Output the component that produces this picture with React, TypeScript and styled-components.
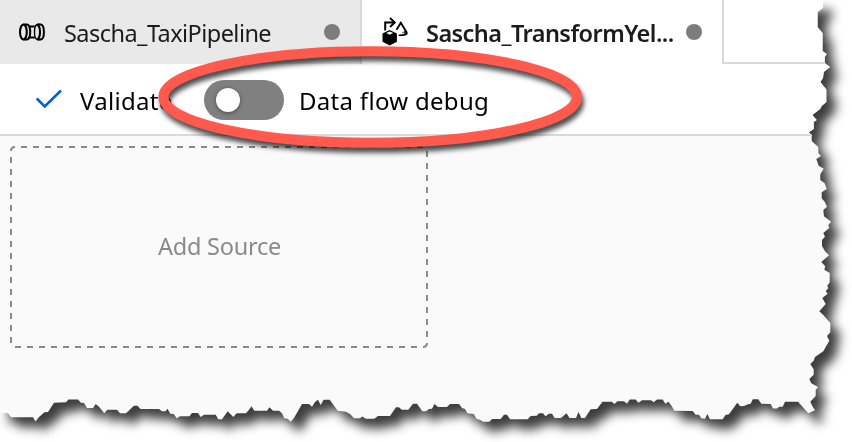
import React from "react";
import styled, { createGlobalStyle } from "styled-components";

const GlobalStyle = createGlobalStyle`
  body { margin: 0; background: #fff; overflow: hidden; }
  * { box-sizing: border-box; }
`;

// Torn right edge, top to bottom.
const rightEdge: number[][] = [
  [822.7, 0], [822.7, 8], [817.5, 12], [817.5, 27], [822.5, 33], [822.5, 51], [826.7, 54], [824.7, 57],
  [824.7, 63], [830, 67], [823.7, 72], [823, 78], [820.3, 82], [826.3, 89.5], [826.3, 102], [821.7, 106],
  [820, 109], [812.3, 115], [816.7, 120], [813.7, 122], [813.7, 129], [808.7, 132.3], [811.7, 135],
  [811.7, 141], [818.3, 147], [818.3, 153], [821, 156], [816.3, 159], [818.7, 165.7], [823.7, 168.7],
  [820.3, 174.3], [820.3, 180], [824.7, 183.3], [826.7, 189], [821.7, 192.3], [821.7, 198.3],
  [824.7, 201.7], [827, 206.7], [823.3, 210], [824, 216.3], [831, 221.7], [828.3, 225], [829.3, 228],
  [823.3, 233], [825, 236.7], [822, 240], [822, 246], [825, 251.3], [829, 255.3], [821.3, 262],
  [825.3, 266.3], [824.3, 269.7], [829.7, 273], [829.7, 282.3], [827.3, 285.7], [828.3, 288.3],
  [825.7, 291], [827.7, 293.7], [822.3, 298], [825.7, 304], [819.3, 311.3], [823.3, 315], [830.3, 323],
  [830.3, 332.3], [827, 336], [829.3, 340.7], [823.3, 351.3], [815, 357], [813.7, 360.7], [810.3, 364],
  [813.7, 369.3], [813.7, 374.7], [809.3, 379], [811.3, 383.3], [818, 387], [815.7, 390], [815.7, 396],
  [810.3, 401.7], [812.7, 406.7], [815, 410.3], [808.3, 413.3],
];

// Torn bottom edge, left to right.
const bottomEdge: number[][] = [
  [0, 413], [8, 413], [11, 417.3], [33, 417.3], [35.5, 421.5], [39, 417], [44.5, 412.3], [48, 412],
  [54, 402.7], [66, 402.3], [68.5, 399.5], [78, 399.5], [81, 402.7], [84, 403], [87, 408], [93, 408],
  [95.7, 404], [99, 406.7], [104.3, 413.3], [107.3, 409.7], [117, 409.7], [120, 413.3], [126, 413.3],
  [134, 405.7], [137.5, 405.7], [140.5, 409], [159, 409], [162, 411.3], [165.5, 411.3], [167.5, 408.7],
  [170.3, 413.7], [173.7, 414], [176.7, 418.3], [180, 416.3], [189.5, 416.3], [192, 413], [198, 413],
  [200.7, 417], [204, 414.7], [215.7, 414.7], [218.3, 419.3], [222, 419.3], [227.7, 411.3], [233.3, 417],
  [236.7, 413.3], [246, 413.3], [249, 409.7], [251.5, 406.3], [254.3, 410.7], [267, 410.7], [269.5, 407.3],
  [273, 410.7], [279, 410.7], [282, 413.3], [284.3, 418.3], [287.7, 418.7], [290.7, 421.7], [294, 418],
  [302, 404], [309, 404], [312, 406.7], [315, 402], [318, 399.7], [320.7, 405], [323.7, 399.7],
  [329.7, 399.7], [337.7, 410.7], [346, 411.7], [350, 414], [354, 418.3], [360, 418.3], [362.5, 416.5],
  [365.5, 418.7], [374.3, 418.7], [378, 416], [390, 416], [396, 407.3], [399, 407.3], [401.7, 409.7],
  [408.3, 409.7], [413, 403.7], [417, 403.7], [422.3, 411.3], [426, 411.3], [429, 409], [432, 408.7],
  [434.5, 404], [438, 407], [447, 407], [450, 404], [459, 404], [462, 408], [465, 409], [467.5, 413.3],
  [473.7, 414], [476.7, 419], [480, 419.7], [483, 421.7], [489.3, 421.7], [492, 419], [500.7, 419],
  [504, 414.7], [507, 414.7], [510, 419.3], [527.7, 419.3], [530.7, 416], [536.7, 415.7], [539, 413.3],
  [543, 413.3], [545.5, 416.3], [549, 413.7], [552, 413.7], [554.5, 418], [561, 418], [566.5, 413.3],
  [569.5, 418], [576, 418], [578.5, 412], [581.3, 418], [585, 418], [590.7, 409.3], [597, 409],
  [602.5, 401.7], [611.7, 401.7], [614.5, 404], [617.3, 401.3], [624, 401.3], [627, 403.7],
  [629.7, 399.5], [635.5, 399.5], [638.5, 402.7], [642, 400.3], [651, 400.3], [653.7, 402.3],
  [657, 399.5], [662.7, 399.5], [665.3, 403.7], [668.5, 401.7], [671.7, 406], [674.3, 410.7],
  [692.7, 411], [695.7, 414.7], [699, 414.7], [701.3, 418.3], [705, 418.7], [707.3, 414], [710, 419.3],
  [722.7, 419.3], [725.5, 415], [729, 414.3], [737.3, 402.7], [740.3, 406.3], [744, 406], [748, 404.3],
  [750.7, 403.7], [752.7, 399.3], [758.3, 399.3], [761.3, 403.7], [770.7, 404], [773, 408.5],
  [777, 408.5], [779.3, 406.7], [782.7, 406.7], [785, 401.7], [798, 401.7],
];

const outline = [[0, 0], ...rightEdge, ...[...bottomEdge].reverse()]
  .map(([x, y]) => `${x}px ${y}px`)
  .join(", ");

const Stage = styled.main`
  position: relative;
  width: 852px;
  height: 442px;
  overflow: hidden;
  background: #fff;
  font-family: "Noto Sans", "Open Sans", sans-serif;
  color: #000;
`;

const PaperShadow = styled.div`
  filter: drop-shadow(9px 10px 5.5px rgba(0, 0, 0, 0.76));
`;

const Paper = styled.div`
  display: flex;
  flex-direction: column;
  width: 852px;
  height: 442px;
  background: #fafafa;
  clip-path: polygon(${outline});
`;

const TabBar = styled.div`
  display: flex;
  flex: none;
  height: 64px;
  background: #fff;
`;

const Tab = styled.div<{ $active?: boolean }>`
  display: flex;
  align-items: center;
  width: 362px;
  height: 64px;
  padding: 0 20px 0 18px;
  border-right: 2px solid #dadada;
  background: ${(p) => (p.$active ? "#fff" : "#e9e9e9")};
  color: #1b1b1b;
  font-weight: ${(p) => (p.$active ? 600 : 400)};
`;

const TabFill = styled.div`
  flex: 1;
  border-bottom: 2px solid #dadada;
`;

const Label = styled.span<{ $width: number; $spacing: number; $size?: number; $drop?: number }>`
  flex: none;
  width: ${(p) => p.$width}px;
  padding-top: ${(p) => p.$drop ?? 2}px;
  font-size: ${(p) => p.$size ?? 23.5}px;
  letter-spacing: ${(p) => p.$spacing}px;
  line-height: 32px;
  white-space: nowrap;
`;

const TabIcon = styled.svg`
  flex: none;
  width: 28px;
  height: 36px;
  margin-right: 18px;
`;

const Dot = styled.span`
  width: 16px;
  height: 16px;
  margin-left: auto;
  border-radius: 50%;
  background: #7c7c7c;
`;

const Toolbar = styled.div`
  display: flex;
  flex: none;
  align-items: center;
  height: 72px;
  padding-left: 34px;
  border-bottom: 2px solid #dadada;
  background: #fff;
`;

const Check = styled.svg`
  flex: none;
  width: 30px;
  height: 24px;
  margin: 2px 16px 0 0;
`;

const Toggle = styled.div`
  flex: none;
  display: flex;
  align-items: center;
  width: 80px;
  height: 40px;
  margin: 2px 15px 0 28px;
  padding-left: 12px;
  border-radius: 20px;
  background: #808080;
`;

const Knob = styled.span`
  width: 24px;
  height: 24px;
  border-radius: 50%;
  background: #fff;
  box-shadow: 0 1px 4px rgba(0, 0, 0, 0.45);
`;

const Canvas = styled.div`
  flex: 1;
  padding: 10px;
`;

const SourceBox = styled.div`
  position: relative;
  display: flex;
  align-items: center;
  justify-content: center;
  width: 418px;
  height: 202px;
  padding-bottom: 4px;
  color: #8a8a8a;
`;

const DashedFrame = styled.svg`
  position: absolute;
  inset: 0;
  width: 418px;
  height: 202px;
`;

const Highlight = styled.svg`
  position: absolute;
  left: 150px;
  top: 38px;
  width: 445px;
  height: 125px;
  overflow: visible;
  filter: drop-shadow(2px 5px 2.5px rgba(0, 0, 0, 0.7));
`;

const PipelineIcon = () => (
  <TabIcon viewBox="18 14 28 36" fill="none" stroke="#000" strokeWidth="2.1">
    <ellipse cx="23.4" cy="32" rx="3.4" ry="7.5" />
    <path d="M23.4 24.500H27C29.300 25 30.200 28 30.200 32S29.300 39 27 39.500H23.400" />
    <path d="M30 26.500H34.800M30 37.500H34.800" />
    <path d="M40.500 24.500H37.200C35.300 25 34.500 28 34.500 32S35.300 39 37.200 39.500H40.500" strokeWidth="1.400" />
    <path d="M37.600 24.800c1.700 1.300 2.400 4 2.400 7.200s-.7 5.900-2.400 7.200" />
    <path d="M37.200 24.500H40.500c2.200 0 3.400 3.500 3.400 7.500s-1.200 7.500-3.400 7.500H37.200" />
  </TabIcon>
);

const DataFlowIcon = () => (
  <TabIcon viewBox="380 14 28 36" fill="none" stroke="#000">
    <path d="M385.200 30.500v-8h9.300" strokeWidth="2" />
    <path d="M390 18l4.700 4.500-4.700 4.400" strokeWidth="2" />
    <path d="M396.500 29.700L400.800 22.800L407 33" strokeWidth="1.900" />
    <path d="M407 33c.2 1.500-2.500 2.300-8.300 2.200" strokeWidth="1.600" />
    <path d="M402.500 32.500h1M405 31v3.500" strokeWidth="1.500" />
    <path d="M389.700 30l7.200 3.600v8.200l-7.200 3.800-7.200-3.800v-8.200z" fill="#000" stroke="none" />
    <path d="M389.700 31.500l3.500 1.600-3.500 1.700-3.500-1.700z" fill="#fff" stroke="none" />
  </TabIcon>
);

export default function App() {
  return (
    <>
      <GlobalStyle />
      <Stage>
        <PaperShadow>
          <Paper>
            <TabBar>
              <Tab>
                <PipelineIcon />
                <Label $width={210} $spacing={-0.55}>Sascha_TaxiPipeline</Label>
                <Dot />
              </Tab>
              <Tab $active>
                <DataFlowIcon />
                <Label $width={250} $spacing={-0.55}>Sascha_TransformYel...</Label>
                <Dot />
              </Tab>
              <TabFill />
            </TabBar>
            <Toolbar>
              <Check viewBox="34 88 30 24" fill="none" stroke="#015cda" strokeWidth="2.500">
                <path d="M36.700 98.500l8 8L61 90.500" />
              </Check>
              <Label $width={96} $spacing={0.3} $size={24} $drop={4}>Validate</Label>
              <Toggle role="switch" aria-checked="false"><Knob /></Toggle>
              <Label $width={200} $spacing={0.3} $size={24} $drop={4}>Data flow debug</Label>
            </Toolbar>
            <Canvas>
              <SourceBox>
                <DashedFrame viewBox="10 146 418 202" fill="none" stroke="#8a8a8a" strokeWidth="2">
                  <path d="M21 147H423M15 347H421M11 157V343M427 151V341" strokeDasharray="6 6" />
                  <path d="M11 151q0-4 4-4M427 343q0 4-4 4" />
                </DashedFrame>
                <Label $width={122} $spacing={-0.25}>Add Source</Label>
              </SourceBox>
            </Canvas>
          </Paper>
        </PaperShadow>
        <Highlight viewBox="150 38 445 125">
          <ellipse cx="370.200" cy="97" rx="206.800" ry="45.800" fill="none" stroke="#ff5a4d" strokeWidth="10" />
        </Highlight>
      </Stage>
    </>
  );
}
